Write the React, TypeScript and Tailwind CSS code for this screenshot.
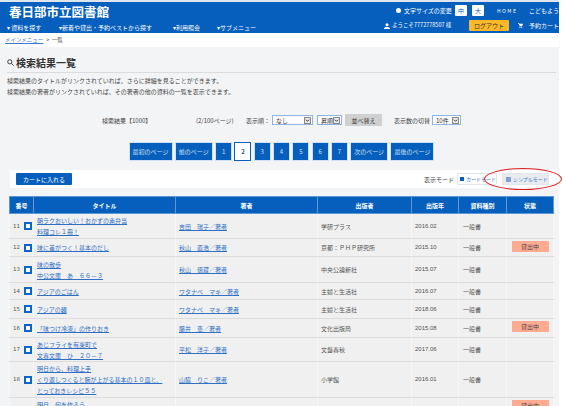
import React from "react";

const font = { fontFamily: '"Noto Sans CJK JP","Liberation Sans",sans-serif' };

const rows = [
  { n: 11, t: ["朝ラクおいしい！おかずの素弁当", "料理コレ１冊！"], a: "吉田　瑞子／著者", p: "学研プラス", y: "2016.02", s: false, h: "h-[25px]" },
  { n: 12, t: ["味に差がつく！基本のだし"], a: "秋山　直浩／著者", p: "京都：ＰＨＰ研究所", y: "2015.10", s: true, h: "h-[18px]" },
  { n: 13, t: ["味の散歩", "中公文庫　あ　６６－３"], a: "秋山　徳蔵／著者", p: "中央公論新社", y: "2015.07", s: false, h: "h-[26px]" },
  { n: 14, t: ["アジアのごはん"], a: "ワタナベ　マキ／著者", p: "主婦と生活社", y: "2016.07", s: false, h: "h-[17px]" },
  { n: 15, t: ["アジアの麺"], a: "ワタナベ　マキ／著者", p: "主婦と生活社", y: "2018.06", s: false, h: "h-[19px]" },
  { n: 16, t: ["「味つけ冷凍」の作りおき"], a: "藤井　恵／著者", p: "文化出版局", y: "2015.08", s: true, h: "h-[19px]" },
  { n: 17, t: ["あじフライを有楽町で", "文春文庫　ひ　２０－７"], a: "平松　洋子／著者", p: "文藝春秋", y: "2017.06", s: false, h: "h-[24px]" },
  { n: 18, t: ["明日から、料理上手", "くり返しつくると腕が上がる基本の１０皿と、", "とっておきレシピ５５"], a: "山脇　りこ／著者", p: "小学館", y: "2016.01", s: false, h: "h-[36px]" },
  { n: 19, t: ["明日、何を作ろう", "毎日のごはん", "おいしい献立"], a: "枝元　なほみ／著者", p: "主婦の友社", y: "2016.03", s: true, h: "h-[36px]" },
];

const pages = ["最初のページ", "前のページ", "1", "2", "3", "4", "5", "6", "7", "次のページ", "最後のページ"];

function Sel({ label, w }: { label: string; w: string }) {
  return (
    <span className={`inline-flex h-[10px] items-center justify-between border border-[#8fb4e0] bg-white pl-[3px] pr-[1px] text-[6px] text-[#333] ${w}`}>
      {label}
      <span className="flex h-[7px] w-[7px] items-center justify-center border border-[#888] bg-[#e8e8e8]">
        <svg viewBox="0 0 6 6" className="h-[5px] w-[5px]"><path d="M1 2l2 2 2-2" fill="none" stroke="#222" strokeWidth="1" /></svg>
      </span>
    </span>
  );
}

export default function App() {
  return (
    <div style={font} className="relative h-[406px] w-[563px] overflow-hidden bg-white">
      <div className="w-[559px]">
        <div className="h-[2px] bg-[#dfe5ec]" />
        <header className="h-[31px] overflow-hidden bg-[#075fbd] text-white">
          <div className="flex h-[18px] items-start">
            <div className="w-[400px] pl-[9px] pt-[3px] text-[12.5px] font-bold leading-[14px]">春日部市立図書館</div>
            <div className="flex items-center whitespace-nowrap pt-[3px] text-[6px]">
              <span className="mr-[3px] h-[5px] w-[5px] rounded-full bg-white" />
              <span className="w-[48px]">文字サイズの変更</span>
              <span className="ml-[3px] flex h-[11px] w-[12px] items-center justify-center rounded-[1px] bg-white text-[#075fbd]">中</span>
              <span className="ml-[5px] flex h-[11px] w-[12px] items-center justify-center rounded-[1px] bg-white text-[#075fbd]">大</span>
              <span className="ml-[13px] w-[32px] text-[5px] tracking-[1.5px]">HOME</span>
              <span>こどもよう</span>
            </div>
          </div>
          <div className="flex h-[13px] items-start">
            <nav className="flex w-[388px] pl-[7px] pt-[3px] text-[6px] leading-[9px]">
              <span className="w-[52px] whitespace-nowrap">▾ 資料を探す</span>
              <span className="w-[114px] whitespace-nowrap">▾新着や貸出・予約ベストから探す</span>
              <span className="w-[44px] whitespace-nowrap">▾利用照会</span>
              <span className="whitespace-nowrap">▾サブメニュー</span>
            </nav>
            <div className="flex h-[11px] items-center whitespace-nowrap text-[5.5px]">
              <svg viewBox="0 0 6 6" className="mr-[2px] h-[6px] w-[6px]" fill="white"><circle cx="3" cy="1.7" r="1.5" /><path d="M0 6V5l2-1h2l2 1v1z" /></svg>
              <span className="w-[69px]">ようこそ7772778507 様</span>
              <span className="ml-[8px] flex h-[11px] w-[40px] items-center justify-center rounded-[1px] bg-[#fbb829] text-[6px] text-[#333]">ログアウト</span>
              <svg viewBox="0 0 6 6" className="ml-[9px] mr-[6px] h-[5px] w-[5px]" fill="white"><path d="M0 0h1.2l.4 1H6L5 4H2L1 1H0z" /><circle cx="2.3" cy="5.2" r=".7" /><circle cx="4.5" cy="5.2" r=".7" /></svg>
              <span className="text-[6px]">予約カート</span>
            </div>
          </div>
        </header>
        <div className="flex h-[14px] items-center pl-[5px] text-[5.5px] text-[#555] shadow-[0_1px_1px_#ddd]">
          <span className="text-[#3b78c9] underline">メインメニュー</span>
          <span className="ml-[3px]">&gt;&nbsp;&nbsp;一覧</span>
        </div>

        <main className="h-[359px] bg-[#f3f4f6] pt-[8px]">
          <div className="ml-[7px] mr-[3px] border-b border-[#dcdcdc] pb-[3px]">
            <h1 className="flex h-[14px] items-center text-[10px] font-bold text-[#333]">
              <svg viewBox="0 0 10 10" className="mr-[2px] h-[7px] w-[7px]" fill="none" stroke="#333" strokeWidth="1.3"><circle cx="4" cy="4" r="3" /><path d="M6.2 6.2L9.5 9.5" /></svg>
              検索結果一覧
            </h1>
          </div>
          <div className="pl-[7px] pt-[2px] text-[6px] leading-[11px] text-[#444]">
            <p>検索結果のタイトルがリンクされていれば、さらに詳細を見ることができます。</p>
            <p>検索結果の著者がリンクされていれば、その著者の他の資料の一覧を表示できます。</p>
          </div>

          <div className="mt-[17px] flex h-[12px] items-center whitespace-nowrap pl-[102px] text-[6px] text-[#444]">
            <span className="w-[94px]">検索結果【1000】</span>
            <span className="w-[50px]">(2/100ページ)</span>
            <span className="w-[26px]">表示順：</span>
            <Sel label="なし" w="w-[41px]" />
            <Sel label="昇順" w="w-[25px] ml-[4px]" />
            <span className="ml-[3px] flex h-[12px] w-[37px] items-center justify-center bg-[#d0d0d0] text-[#333]">並べ替え</span>
            <span className="ml-[12px] w-[36px]">表示数の切替</span>
            <Sel label="10件" w="w-[29px] ml-[2px]" />
          </div>

          <div className="mt-[16px] flex h-[19px] justify-center gap-[2.3px] pl-[4px] text-[6px]">
            {pages.map((p) => {
              const active = p === "2";
              const w = p.length > 1 ? (p.length > 5 ? "w-[44px]" : "w-[38px]") : "w-[17px]";
              return (
                <span key={p} className={`flex items-center justify-center border ${w} ${active ? "border-[#075fbd] bg-white font-bold text-[#075fbd]" : "border-[#cfe0f2] bg-[#075fbd] text-[#cfe0f2]"}`}>
                  {p}
                </span>
              );
            })}
          </div>

          <div className="ml-[10px] mt-[9px] flex h-[18px] items-center justify-between bg-white pl-[6px] pr-[10px] text-[6px]">
            <span className="flex h-[12px] w-[56px] items-center justify-center rounded-[1px] bg-[#075fbd] text-white">カートに入れる</span>
            <div className="flex items-center whitespace-nowrap text-[#444]">
              <span className="mr-[3px]">表示モード</span>
              <span className="flex h-[12px] w-[40px] items-center rounded-[1px] border border-[#e2e6ea] bg-white pl-[2px] text-[5px] text-[#3b78c9]">
                <span className="mr-[2px] h-[4px] w-[6px] bg-[#075fbd]" />カードモード
              </span>
              <span className="ml-[5px] flex h-[12px] w-[47px] items-center rounded-[1px] border border-[#e2e6ea] bg-[#e9ebee] pl-[3px] text-[5px] text-[#3b78c9]">
                <span className="mr-[2px] h-[5px] w-[5px] bg-[#7ba3d6]" />シンプルモード
              </span>
            </div>
          </div>

          <table className="ml-[9px] mt-[8px] w-[544px] table-fixed border-collapse text-[6px] text-[#555]">
            <thead>
              <tr className="h-[17px] bg-[#075fbd] text-white">
                {[["番号", "w-[24px]"], ["タイトル", "w-[142px]"], ["著者", "w-[142px]"], ["出版者", "w-[94px]"], ["出版年", "w-[47px]"], ["資料種別", "w-[48px]"], ["状態", "w-[47px]"]].map(([l, w]) => (
                  <th key={l} className={`border border-[#5e97d6] p-0 font-bold ${w}`}>{l}</th>
                ))}
              </tr>
            </thead>
            <tbody>
              {rows.map((r) => (
                <tr key={r.n} className={`${r.h} bg-[#f0f0f0]`}>
                  <td className="border-x border-y border-x-[#f7f7f7] border-y-[#dcdcdc] p-0">
                    <div className="flex items-center pl-[3px]">
                      <span className="w-[11px] text-[5.5px] text-[#555]" style={{ fontFamily: '"DejaVu Sans",sans-serif' }}>{r.n}</span>
                      <span className="box-border h-[8px] w-[8px] border-2 border-[#0a66c8] bg-white" />
                    </div>
                  </td>
                  <td className="border-x border-y border-x-[#f7f7f7] border-y-[#dcdcdc] py-0 pl-[3px] pr-0 leading-[11px] text-[#2f6fc4]">
                    {r.t.map((x) => <div key={x} className="h-[11px] whitespace-nowrap"><span className="underline">{x}</span></div>)}
                  </td>
                  <td className="border-x border-y border-x-[#f7f7f7] border-y-[#dcdcdc] py-0 pl-[3px] pr-0 text-[#2f6fc4]"><span className="underline">{r.a}</span></td>
                  <td className="border-x border-y border-x-[#f7f7f7] border-y-[#dcdcdc] py-0 pl-[3px] pr-0">{r.p}</td>
                  <td className="border-x border-y border-x-[#f7f7f7] border-y-[#dcdcdc] py-0 pl-[3px] pr-0 text-[6px]" style={{ fontFamily: '"Liberation Sans",sans-serif' }}>{r.y}</td>
                  <td className="border-x border-y border-x-[#f7f7f7] border-y-[#dcdcdc] py-0 pl-[4px] pr-0">一般書</td>
                  <td className="border-x border-y border-x-[#f7f7f7] border-y-[#dcdcdc] p-0 pt-[2px] align-top">
                    {r.s && <span className="mx-auto flex h-[11px] w-[37px] items-center justify-center rounded-[1px] bg-[#ffab91] text-[#444]">貸出中</span>}
                  </td>
                </tr>
              ))}
            </tbody>
          </table>
        </main>
      </div>
      <div className="absolute left-[484px] top-[168px] h-[22px] w-[78px] rounded-[50%] border border-[#e02020]" />
    </div>
  );
}
